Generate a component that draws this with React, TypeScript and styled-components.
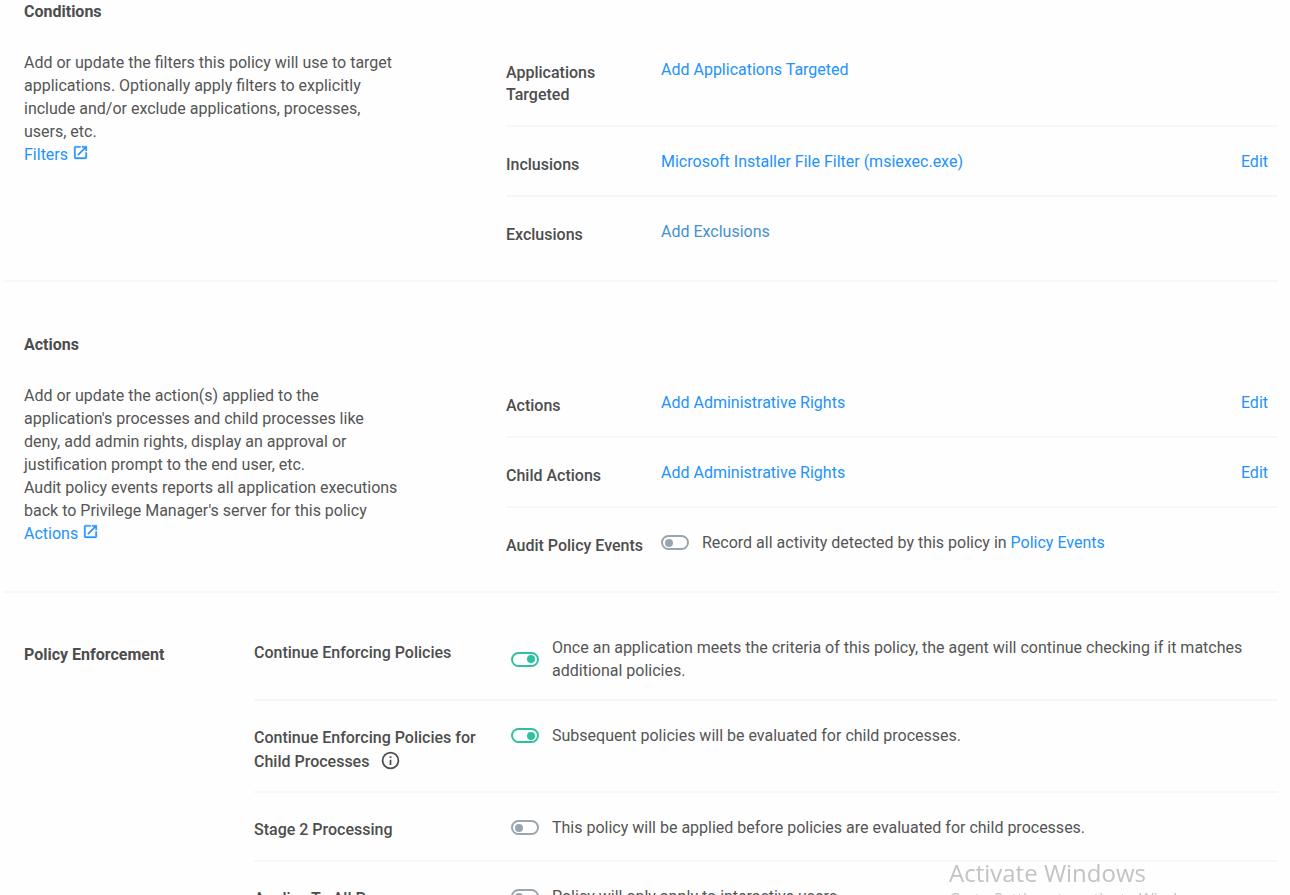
import React, { useState } from "react";
import styled, { createGlobalStyle } from "styled-components";

const GlobalStyle = createGlobalStyle`
  *, *::before, *::after { box-sizing: border-box; }
  body {
    margin: 0;
    background: #fefefe;
    color: #555;
    font: 400 16px/23px Roboto, sans-serif;
  }
`;

const Page = styled.main`
  padding: 0 12px 0 4px;
`;

const Section = styled.section<{ $first?: boolean }>`
  display: grid;
  grid-template-columns: 482px minmax(0, 1fr);
  padding: ${(p) => (p.$first ? "0" : "51px")} 0 15px 20px;
  border-bottom: 2px solid #f7f7f8;
`;

const EnforcementSection = styled(Section)`
  grid-template-columns: 230px minmax(0, 1fr);
  padding-top: 20px;
  border-bottom: 0;
`;

const Title = styled.h2`
  margin: 0;
  font-size: 16px;
  line-height: 23px;
  font-weight: 700;
  color: #4d4d4d;
`;

const EnforcementTitle = styled(Title)`
  padding-top: 30px;
`;

const Description = styled.p`
  max-width: 378px;
  margin: 28px 0 0;
`;

const Rows = styled.div`
  margin-top: 35px;
`;

const Row = styled.div`
  display: grid;
  grid-template-columns: 155px minmax(0, 1fr) auto;
  align-items: start;
  padding: 23px 10px 19px 0;
  border-bottom: 2px solid #f7f7f8;

  &:last-child { border-bottom: 0; }
`;

const EnforcementRow = styled(Row)`
  grid-template-columns: 257px minmax(0, 1fr);
  min-height: 69px;
  padding-bottom: 17px;
`;

const RowLabel = styled.label`
  padding-top: 4px;
  line-height: 22px;
  font-weight: 500;
  color: #4d4d4d;
`;

const NarrowLabel = styled(RowLabel)`
  max-width: 120px;
`;

const EnforcementLabel = styled(RowLabel)<{ $lead?: boolean }>`
  max-width: 240px;
  padding-top: ${(p) => (p.$lead ? "5px" : "2px")};
  line-height: 24px;
`;

const Link = styled.a<{ $muted?: boolean }>`
  color: ${(p) => (p.$muted ? "#4591cf" : "#2492fb")};
  text-decoration: none;
  justify-self: start;

  svg {
    width: 17px;
    height: 17px;
    margin-left: 4px;
    vertical-align: -1px;
  }
`;

const EditButton = styled.button`
  padding: 0;
  border: 0;
  background: none;
  color: #2492fb;
  font: inherit;
  cursor: pointer;
`;

const Setting = styled.div`
  display: flex;
  align-items: center;
  gap: 13px;
`;

const Switch = styled.input`
  appearance: none;
  flex: none;
  display: flex;
  align-items: center;
  width: 28px;
  height: 15px;
  margin: 0;
  padding: 0 2px;
  border: 2px solid #9ba5ad;
  border-radius: 8px;
  background: #fff;
  cursor: pointer;

  &::before {
    content: "";
    width: 8px;
    height: 8px;
    border-radius: 50%;
    background: #9ba5ad;
  }

  &:checked {
    justify-content: flex-end;
    border-color: #2fc0a0;
  }

  &:checked::before { background: #2fc0a0; }
`;

const InfoIcon = styled.svg`
  width: 21px;
  height: 21px;
  margin-left: 7px;
  vertical-align: -4px;
`;

const Watermark = styled.aside`
  position: fixed;
  right: 75px;
  bottom: -15px;
  width: 266px;
  color: #c3c3c3;
  font-family: "Open Sans", sans-serif;
  font-size: 16px;
  line-height: 22px;
  white-space: nowrap;
  pointer-events: none;

  strong {
    display: block;
    font-size: 24px;
    line-height: 30px;
    font-weight: 400;
  }
`;

const OpenIcon = () => (
  <svg viewBox="0 0 24 24" fill="currentColor" stroke="currentColor" strokeWidth="0.5" aria-hidden="true">
    <path d="M19 19H5V5h7V3H5a2 2 0 0 0-2 2v14a2 2 0 0 0 2 2h14c1.1 0 2-.9 2-2v-7h-2v7zM14 3v2h3.590l-9.830 9.830 1.410 1.410L19 6.410V10h2V3h-7z" />
  </svg>
);

function Toggle({ id, on = false, children }: { id: string; on?: boolean; children: React.ReactNode }) {
  const [checked, setChecked] = useState(on);
  return (
    <Setting>
      <Switch id={id} type="checkbox" role="switch" checked={checked} onChange={() => setChecked(!checked)} />
      <span>{children}</span>
    </Setting>
  );
}

export default function App() {
  return (
    <>
      <GlobalStyle />
      <Page>
        <Section $first>
          <div>
            <Title>Conditions</Title>
            <Description>
              Add or update the filters this policy will use to target applications. Optionally apply
              filters to explicitly include and/or exclude applications, processes, users, etc.
              <br />
              <Link href="#filters">Filters<OpenIcon /></Link>
            </Description>
          </div>
          <Rows>
            <Row>
              <NarrowLabel as="div">Applications Targeted</NarrowLabel>
              <Link href="#targeted">Add Applications Targeted</Link>
            </Row>
            <Row>
              <RowLabel as="div">Inclusions</RowLabel>
              <Link href="#msiexec">Microsoft Installer File Filter (msiexec.exe)</Link>
              <EditButton type="button">Edit</EditButton>
            </Row>
            <Row>
              <RowLabel as="div">Exclusions</RowLabel>
              <Link href="#exclusions" $muted>Add Exclusions</Link>
            </Row>
          </Rows>
        </Section>

        <Section>
          <div>
            <Title>Actions</Title>
            <Description>
              Add or update the action(s) applied to the application's processes and child processes
              like deny, add admin rights, display an approval or justification prompt to the end
              user, etc.
              <br />
              Audit policy events reports all application executions back to Privilege Manager's
              server for this policy
              <br />
              <Link href="#actions">Actions<OpenIcon /></Link>
            </Description>
          </div>
          <Rows>
            <Row>
              <RowLabel as="div">Actions</RowLabel>
              <Link href="#admin-rights">Add Administrative Rights</Link>
              <EditButton type="button">Edit</EditButton>
            </Row>
            <Row>
              <RowLabel as="div">Child Actions</RowLabel>
              <Link href="#child-admin-rights">Add Administrative Rights</Link>
              <EditButton type="button">Edit</EditButton>
            </Row>
            <Row>
              <RowLabel htmlFor="audit">Audit Policy Events</RowLabel>
              <Toggle id="audit">
                Record all activity detected by this policy in <Link href="#events">Policy Events</Link>
              </Toggle>
            </Row>
          </Rows>
        </Section>

        <EnforcementSection>
          <EnforcementTitle>Policy Enforcement</EnforcementTitle>
          <div>
            <EnforcementRow>
              <EnforcementLabel htmlFor="continue" $lead>Continue Enforcing Policies</EnforcementLabel>
              <Toggle id="continue" on>
                Once an application meets the criteria of this policy, the agent will continue
                checking if it matches additional policies.
              </Toggle>
            </EnforcementRow>
            <EnforcementRow>
              <EnforcementLabel htmlFor="continue-child">
                Continue Enforcing Policies for Child Processes{" "}
                <InfoIcon viewBox="0 0 24 24" fill="currentColor" aria-hidden="true">
                  <path d="M11 7h2v2h-2zm0 4h2v6h-2zm1-9a10 10 0 1 0 0 20 10 10 0 0 0 0-20zm0 18a8 8 0 1 1 0-16 8 8 0 0 1 0 16z" />
                </InfoIcon>
              </EnforcementLabel>
              <Toggle id="continue-child" on>
                Subsequent policies will be evaluated for child processes.
              </Toggle>
            </EnforcementRow>
            <EnforcementRow>
              <EnforcementLabel htmlFor="stage-two">Stage 2 Processing</EnforcementLabel>
              <Toggle id="stage-two">
                This policy will be applied before policies are evaluated for child processes.
              </Toggle>
            </EnforcementRow>
            <EnforcementRow>
              <EnforcementLabel htmlFor="all-processes">Applies To All Processes</EnforcementLabel>
              <Toggle id="all-processes">Policy will only apply to interactive users.</Toggle>
            </EnforcementRow>
          </div>
        </EnforcementSection>
      </Page>
      <Watermark>
        <strong>Activate Windows</strong>
        Go to Settings to activate Windows.
      </Watermark>
    </>
  );
}
